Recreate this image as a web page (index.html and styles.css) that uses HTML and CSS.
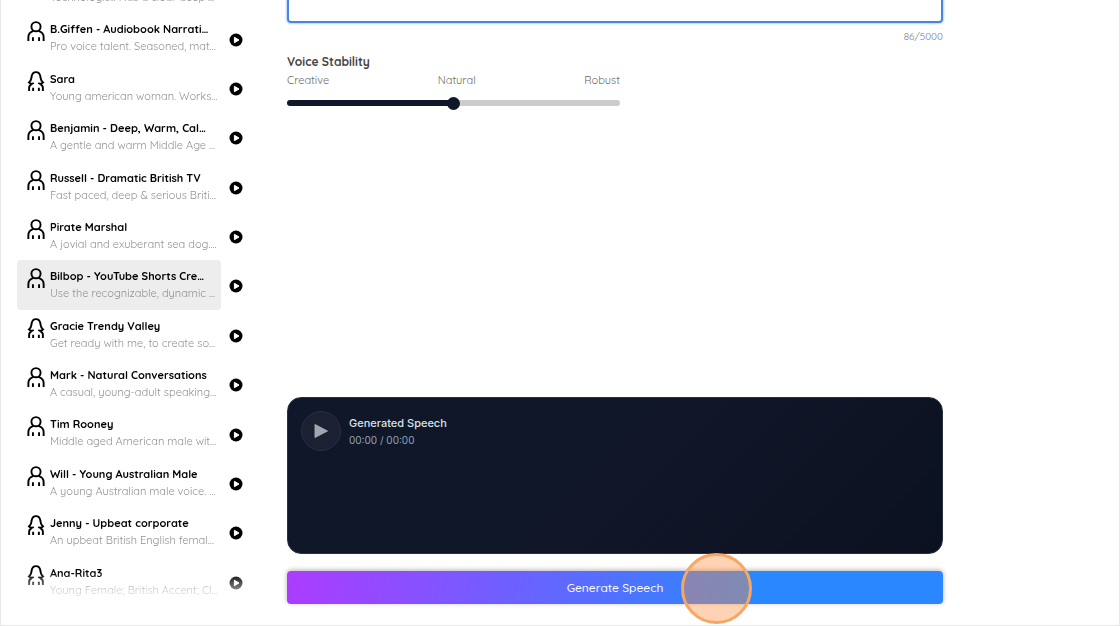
FILE: index.html
```html
<!DOCTYPE html>
<html lang="en">
<head>
  <meta charset="UTF-8">
  <meta name="viewport" content="width=device-width, initial-scale=1">
  <title>Text to Speech</title>
  <link rel="stylesheet" href="styles.css">
</head>
<body>
  <svg class="sprite" aria-hidden="true">
    <symbol id="man" viewBox="0 0 18 22">
      <circle cx="9" cy="6" r="4.8"/>
      <path d="M1 21v-4c0-3 2-5.500 5.300-6.600M17 21v-4c0-3-2-5.500-5.300-6.600M5.800 17V21M12.200 17V21"/>
    </symbol>
    <symbol id="woman" viewBox="0 0 18 22">
      <path d="M1.800 21v-3.500c0-1.700.8-2.800 2.600-3.500M16.200 21v-3.500c0-1.700-.8-2.800-2.600-3.500M6 17.500V21M12 17.500V21"/>
      <path d="M6.600 12.600c-1.600 1-3.700.8-5-.6C4.200 10.200 3.800 9 4.400 5.800 4.900 2.700 6.500 1.200 9 1.200s4.100 1.500 4.600 4.600c.6 3.200.2 4.400 2.800 6.200-1.300 1.400-3.400 1.600-5 .6"/>
    </symbol>
    <symbol id="play" viewBox="0 0 14 14">
      <circle cx="7" cy="7" r="6.500" fill="#000" stroke="none"/>
      <path d="M5.400 4.300v5.400L10 7z" fill="#fff" stroke="#fff" stroke-width="1"/>
    </symbol>
  </svg>

  <div class="app">
    <aside class="sidebar">
      <ul class="voices" id="voices"></ul>
    </aside>

    <main class="editor">
      <textarea class="prompt" aria-label="Text to speak"></textarea>
      <p class="counter">86/5000</p>

      <div class="stability">
        <label class="stability-title" for="stability">Voice Stability</label>
        <div class="stability-labels">
          <span>Creative</span>
          <span>Natural</span>
          <span>Robust</span>
        </div>
        <input class="slider" id="stability" type="range" min="0" max="100" value="50">
      </div>

      <section class="player">
        <button class="player-play" type="button" aria-label="Play speech">
          <svg viewBox="0 0 16 16"><path d="M2 1.500v13L14.500 8z"/></svg>
        </button>
        <div>
          <h2 class="player-title">Generated Speech</h2>
          <p class="player-time">00:00 / 00:00</p>
        </div>
      </section>

      <div class="actions">
        <button class="generate" type="button">Generate Speech</button>
        <span class="click-marker"></span>
      </div>
    </main>
  </div>

  <script src="voices.js"></script>
</body>
</html>
```
FILE: voices.js
```js
const voices = [
  ["man", "Technologist", "Technologist. Has a clear deep …"],
  ["man", "B.Giffen - Audiobook Narrati…", "Pro voice talent. Seasoned, mat…"],
  ["woman", "Sara", "Young american woman. Works…"],
  ["man", "Benjamin - Deep, Warm, Cal…", "A gentle and warm Middle Age …"],
  ["man", "Russell - Dramatic British TV", "Fast paced, deep & serious Briti…"],
  ["man", "Pirate Marshal", "A jovial and exuberant sea dog.…"],
  ["man", "Bilbop - YouTube Shorts Cre…", "Use the recognizable, dynamic …"],
  ["woman", "Gracie Trendy Valley", "Get ready with me, to create so…"],
  ["man", "Mark - Natural Conversations", "A casual, young-adult speaking…"],
  ["man", "Tim Rooney", "Middle aged American male wit…"],
  ["man", "Will - Young Australian Male", "A young Australian male voice. …"],
  ["woman", "Jenny - Upbeat corporate", "An upbeat British English femal…"],
  ["woman", "Ana-Rita3", "Young Female; British Accent; Cl…"]
];
const selected = 6;

const list = document.getElementById("voices");

voices.forEach(function([icon, name, description], i) {
  const row = document.createElement("li");
  row.className = "voice-row";
  row.innerHTML = `
    <button class="voice" type="button">
      <svg class="voice-icon"><use href="#${icon}"/></svg>
      <span class="voice-text">
        <span class="voice-name"></span>
        <span class="voice-description"></span>
      </span>
    </button>
    <button class="preview" type="button">
      <svg class="preview-icon"><use href="#play"/></svg>
    </button>`;
  row.querySelector(".voice-name").textContent = name;
  row.querySelector(".voice-description").textContent = description;
  row.querySelector(".preview").setAttribute("aria-label", "Preview " + name);
  if (i === selected) {
    row.querySelector(".voice").classList.add("selected");
  }
  list.appendChild(row);
});
```
FILE: styles.css
```css
* {
  box-sizing: border-box;
}

body {
  margin: 0;
  font-family: Quicksand, Lato, sans-serif;
  background-color: white;
}

button {
  padding: 0;
  border: none;
  background: none;
  font-family: inherit;
  cursor: pointer;
}

h2, p {
  margin: 0;
}

.sprite {
  display: none;
}

.app {
  display: flex;
  height: 100vh;
  border: 1px solid #e8e8e8;
  border-top: none;
  overflow: hidden;
}

/* voice list */
.sidebar {
  display: flex;
  flex-direction: column;
  justify-content: flex-end;
  flex: 0 0 250px;
  padding: 0 0 19px 16px;
}

.voices {
  display: grid;
  grid-auto-rows: 1fr;
  flex: none;
  height: calc(100vh + 16px);
  margin: 0;
  padding: 0;
  list-style: none;
  -webkit-mask-image: linear-gradient(to top, transparent, black 34px);
  mask-image: linear-gradient(to top, transparent, black 34px);
}

.voice-row {
  display: flex;
  align-items: center;
  gap: 8px;
}

.voice {
  display: flex;
  align-items: flex-start;
  gap: 5px;
  width: 204px;
  height: 100%;
  padding: 8px 0 0 10px;
  border-radius: 4px;
  text-align: left;
}

.voice.selected {
  background-color: #ededed;
}

.voice-icon {
  flex: none;
  width: 18px;
  height: 21px;
  fill: none;
  stroke: black;
  stroke-width: 2;
}

.voice-text {
  min-width: 0;
}

.voice-name,
.voice-description {
  display: block;
  white-space: nowrap;
  line-height: 17px;
}

.voice-name {
  font-size: 11px;
  font-weight: bold;
  color: black;
}

.voice-description {
  font-size: 11px;
  color: #919191;
}

.preview {
  display: flex;
  padding-top: 3px;
}

.preview-icon {
  width: 14px;
  height: 14px;
}

/* editor */
.editor {
  display: flex;
  flex-direction: column;
  flex: 1;
  padding: 0 176px 21px 36px;
}

.prompt {
  flex: none;
  width: 100%;
  height: 34px;
  margin-top: -11px;
  border: 2px solid #4a86e0;
  border-radius: 4px;
  outline: none;
  box-shadow: 0 0 2px 1px #b5d5fb;
  resize: none;
}

.counter {
  margin-top: 6px;
  font-size: 10px;
  line-height: 16px;
  color: #7d828f;
  text-align: right;
}

.stability {
  width: 333px;
  margin-top: 8px;
}

.stability-title {
  display: block;
  font-size: 12px;
  font-weight: bold;
  line-height: 18px;
  color: #444;
}

.stability-labels {
  display: flex;
  justify-content: space-between;
  font-size: 11px;
  line-height: 18px;
  color: #6b6b6b;
}

.slider {
  display: block;
  width: 100%;
  height: 6px;
  margin: 11px 0 0;
  border-radius: 3px;
  background: linear-gradient(to right, #0f172a 50%, #ccc 50%);
  -webkit-appearance: none;
  appearance: none;
}

.slider::-webkit-slider-thumb {
  width: 13px;
  height: 13px;
  border-radius: 50%;
  background-color: #0f172a;
  -webkit-appearance: none;
}

.player {
  display: flex;
  align-items: flex-start;
  gap: 8px;
  height: 157px;
  margin-top: auto;
  padding: 13px;
  border: 1px solid #263143;
  border-radius: 14px;
  background: linear-gradient(135deg, #0f172a, #111729 50%, #0b111f);
  font-family: Inter, sans-serif;
}

.player-play {
  display: flex;
  align-items: center;
  justify-content: center;
  width: 40px;
  height: 40px;
  border: 1px solid #2a3042;
  border-radius: 50%;
  background-color: #1b2032;
}

.player-play svg {
  width: 16px;
  height: 16px;
  fill: #a3a6ad;
  stroke: #a3a6ad;
  stroke-width: 1;
  stroke-linejoin: round;
}

.player-title {
  padding-top: 4px;
  font-size: 11px;
  font-weight: 500;
  line-height: 17px;
  color: #dbe1e9;
}

.player-time {
  font-size: 10px;
  line-height: 16px;
  color: #94a3b8;
}

.actions {
  position: relative;
  margin-top: 17px;
}

.generate {
  display: block;
  width: 100%;
  height: 33px;
  border-radius: 4px;
  background: linear-gradient(100deg, #ad3bff, #2b87ff 70%);
  box-shadow: 0 -1px 5px rgba(0, 0, 0, 0.3);
  color: white;
  font-size: 12px;
  font-weight: 500;
}

/* ring over the last click */
.click-marker {
  position: absolute;
  top: -18px;
  left: 60%;
  width: 71px;
  height: 71px;
  border: 3px solid #f7a762;
  border-radius: 50%;
  background-color: rgba(255, 145, 65, 0.4);
  pointer-events: none;
}
```
